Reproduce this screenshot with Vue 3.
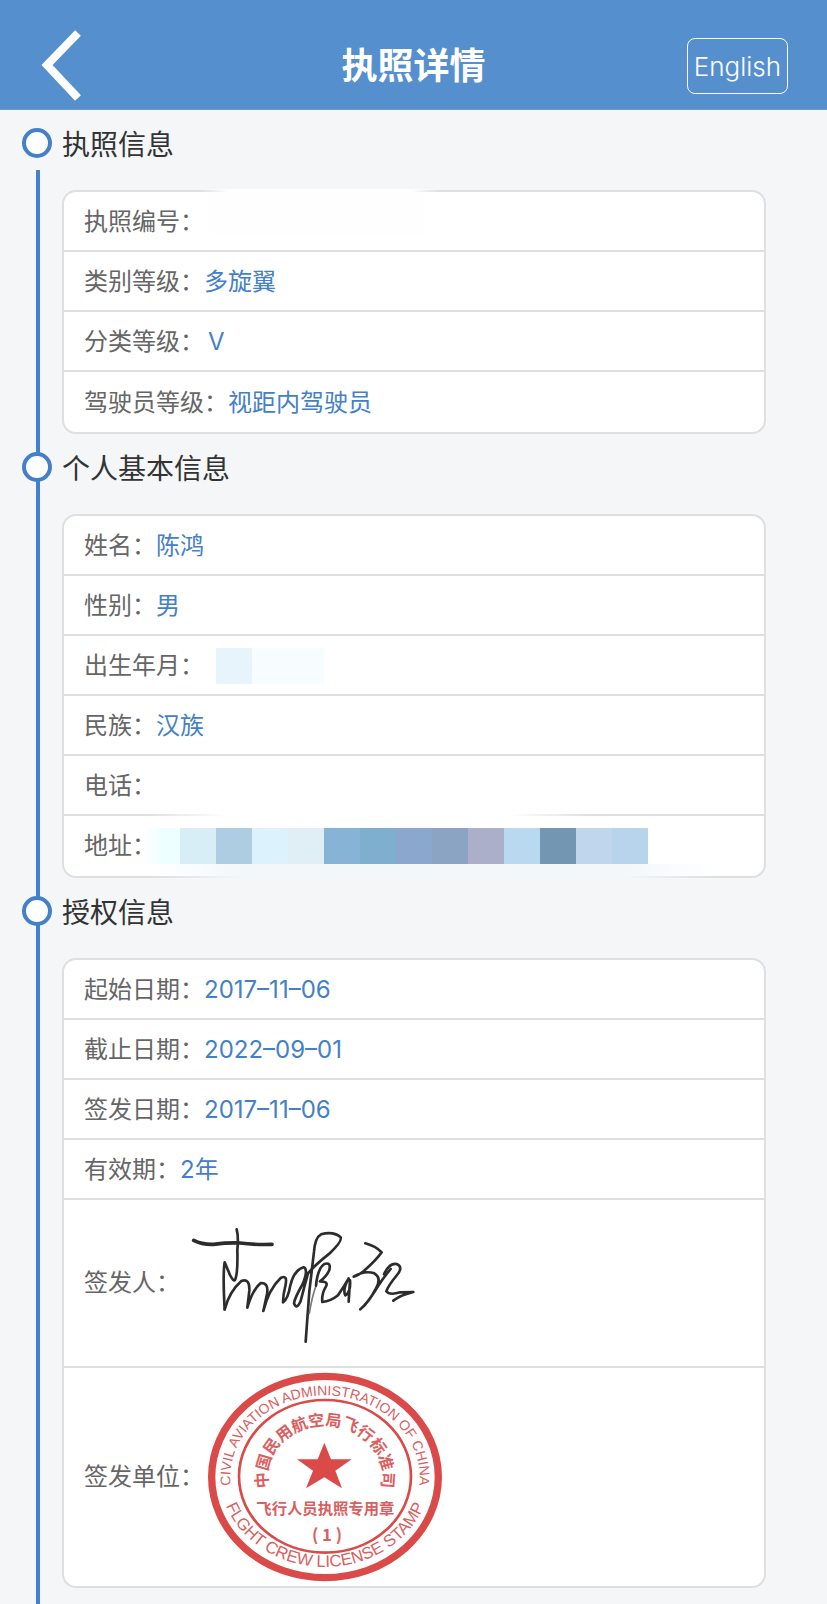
<template>
    <div class="page">
        <header class="header">
            <button class="back" type="button" aria-label="返回">
                <svg width="44" height="72" viewBox="0 0 44 72">
                    <path d="M39 3 L8 35 L39 68" fill="none" stroke="#fff" stroke-width="8" />
                </svg>
            </button>
            <h1 class="title">执照详情</h1>
            <button class="lang" type="button">English</button>
        </header>

        <main class="timeline">
            <section class="section" v-for="section in sections" :key="section.title">
                <h2 class="section-title">{{section.title}}</h2>
                <dl class="card">
                    <div class="row" :class="row.type" v-for="row in section.rows" :key="row.label">
                        <dt>{{row.label}}：</dt>
                        <dd>
                            <svg v-if="row.type === 'signature'" class="sign" viewBox="0 -6 750 450">
                                <g fill="none" stroke="#2c2c2c" stroke-width="8" stroke-linecap="round" stroke-linejoin="round">
                                    <path d="M41 91 Q66 104 100 103 Q140 98 180 99 Q225 105 276 103" stroke-width="11" />
                                    <path d="M170 58 Q176 80 172 120 Q174 190 165 210 Q160 215 150 195 L134 157 Q128 190 134 298" />
                                    <path d="M134 298 Q148 245 184 213 Q210 204 208 242 L202 293 Q217 240 242 219 Q267 218 261 252 L250 303 Q266 238 302 204 Q324 192 316 228 Q309 255 309 277 Q324 268 331 226 Q342 180 371 172 Q386 178 368 222 Q344 264 342 280 Q350 301 362 273 Q374 226 384 190" />
                                    <path d="M384 190 Q405 165 448 131 Q490 91 481 81 Q460 63 423 73 Q405 83 402 125 L388 244 L377 395" />
                                    <path d="M408 227 Q396 260 388 310" stroke="#777" stroke-width="5" />
                                    <path d="M408 227 Q413 175 433 162 Q454 155 448 180 Q440 199 420 214 Q446 214 438 229 Q424 252 427 276 Q452 274 474 256 Q492 229 506 205 Q487 239 496 256 Q513 247 510 211 L506 275" />
                                    <path d="M556 100 Q588 109 605 127 Q590 149 554 181 Q532 199 521 200 Q555 180 583 190 Q606 204 588 235 Q567 276 541 298 Q560 282 583 246 Q607 206 632 177" />
                                    <path d="M612 193 Q628 158 650 162 Q671 171 651 195 Q624 228 619 244 Q628 257 661 247 L700 246 Q662 255 640 272" />
                                </g>
                            </svg>
                            <svg v-else-if="row.type === 'seal'" class="stamp" viewBox="27 27 720 648">
                                <defs>
                                    <path id="arc-top" d="M114 410 A284 246 0 1 1 666 410" />
                                    <path id="arc-inner" d="M226 395 A172 152 0 1 1 554 395" />
                                    <path id="arc-bottom" d="M80 400 A318 284 0 0 0 700 400" />
                                </defs>
                                <ellipse cx="390" cy="351" rx="340" ry="302" fill="none" stroke="#da4a48" stroke-width="22" />
                                <ellipse cx="390" cy="349" rx="258" ry="229" fill="none" stroke="#da4a48" stroke-width="8" />
                                <path d="M388 248 L408 298 L470 298 L421 332 L441 385 L388 352 L333 385 L354 332 L306 298 L368 298 Z" fill="#da4a48" />
                                <g fill="#d9605f" text-anchor="middle">
                                    <text class="seal-en" font-size="42"><textPath href="#arc-top" startOffset="50%">CIVIL AVIATION ADMINISTRATION OF CHINA</textPath></text>
                                    <text class="seal-cn" font-size="48"><textPath href="#arc-inner" startOffset="50%">中国民用航空局飞行标准司</textPath></text>
                                    <text class="seal-cn" x="391" y="462" font-size="46">飞行人员执照专用章</text>
                                    <text class="seal-cn" x="396" y="543" font-size="50">( 1 )</text>
                                    <text class="seal-en" font-size="50"><textPath href="#arc-bottom" startOffset="50%">FLGHT CREW LICENSE STAMP</textPath></text>
                                </g>
                            </svg>
                            <span v-else-if="row.blocks" class="blocks">
                                <i v-for="(color,index) in row.blocks" :key="index" :style="{background: color}"></i>
                            </span>
                            <template v-else>{{row.value}}</template>
                        </dd>
                    </div>
                </dl>
            </section>
        </main>
    </div>
</template>

<script setup>
const sections = [
    {
        title: '执照信息',
        rows: [
            { label: '执照编号', value: '', type: 'number' },
            { label: '类别等级', value: '多旋翼' },
            { label: '分类等级', value: 'V', type: 'class' },
            { label: '驾驶员等级', value: '视距内驾驶员' },
        ],
    },
    {
        title: '个人基本信息',
        rows: [
            { label: '姓名', value: '陈鸿' },
            { label: '性别', value: '男' },
            { label: '出生年月', type: 'birth', blocks: ['#e7f4fc', '#f6fcff', '#f6fcff'] },
            { label: '民族', value: '汉族' },
            { label: '电话', value: '', type: 'phone' },
            {
                label: '地址',
                type: 'address',
                blocks: [
                    'linear-gradient(90deg, #fff, #eeffff 50%)', '#d8eef7', '#aecce2', '#dcf3fd', '#e0eff5',
                    '#86b3d6', '#7fafcf', '#8aa8cd', '#8ca4c4', '#abafca', '#b8d9ef', '#7397b2', '#c0d6ed', '#b8d4ed',
                ],
            },
        ],
    },
    {
        title: '授权信息',
        rows: [
            { label: '起始日期', value: '2017–11–06' },
            { label: '截止日期', value: '2022–09–01' },
            { label: '签发日期', value: '2017–11–06' },
            { label: '有效期', value: '2年' },
            { label: '签发人', type: 'signature' },
            { label: '签发单位', type: 'seal' },
        ],
    },
]
</script>

<style>
body {
    background: #f5f6f8;
}
</style>

<style scoped>
.page {
    font-family: Inter, "Noto Sans CJK SC", sans-serif;
    color: #333;
}
.header {
    display: grid;
    grid-template-columns: 1fr auto 1fr;
    align-items: center;
    box-sizing: border-box;
    height: 110px;
    padding: 23px 39px 0 39px;
    background: #568fcd;
    border-bottom: 1px solid #6f99c6;
}
.back {
    justify-self: start;
    display: flex;
    padding: 0;
    border: 0;
    background: none;
    cursor: pointer;
}
.title {
    margin: 0;
    font-size: 36px;
    line-height: 54px;
    font-weight: 700;
    color: #fff;
}
.lang {
    justify-self: end;
    box-sizing: border-box;
    height: 56px;
    padding: 0 6px;
    border: 1px solid #fff;
    border-radius: 8px;
    background: none;
    color: #fff;
    font-family: inherit;
    font-size: 26px;
    font-weight: 300;
    cursor: pointer;
}
.timeline {
    position: relative;
    padding: 0 61px 16px 62px;
}
/* vertical line behind the dots */
.timeline::before {
    content: "";
    position: absolute;
    top: 60px;
    bottom: 0;
    left: 36px;
    width: 4px;
    background: #4380cf;
}
.section-title {
    position: relative;
    margin: 0 0 14px;
    padding-top: 4px;
    font-size: 28px;
    line-height: 62px;
    font-weight: 400;
}
.section-title::before {
    content: "";
    position: absolute;
    top: 18px;
    left: -40px;
    box-sizing: border-box;
    width: 30px;
    height: 30px;
    border: 4px solid #4380c8;
    border-radius: 50%;
    background: #fff;
}
.card {
    margin: 0;
    border: 2px solid #dddfe1;
    border-radius: 14px;
    background: #fff;
}
.row {
    position: relative;
    display: flex;
    align-items: center;
    box-sizing: border-box;
    min-height: 60px;
    padding: 2px 0 0 20px;
    border-bottom: 2px solid #dddfe1;
    font-size: 24px;
    line-height: 36px;
    font-weight: 400;
}
.row:last-child {
    border-bottom: 0;
}
dt {
    color: #666;
}
dd {
    display: flex;
    margin: 0;
    color: #4480c8;
}
.class dd {
    padding-left: 4px;
}
.signature {
    min-height: 168px;
    padding-top: 0;
}
.seal {
    min-height: 218px;
    padding-top: 0;
}
.sign {
    width: 250px;
    height: 150px;
}
.stamp {
    width: 240px;
    height: 216px;
}
.seal-en {
    font-family: "Liberation Sans Narrow", "Liberation Sans", sans-serif;
}
.seal-cn {
    font-family: "Noto Sans CJK SC", sans-serif;
    font-weight: 700;
}
.blocks {
    display: flex;
}
.blocks i {
    width: 36px;
    height: 36px;
}
.birth .blocks {
    padding-left: 12px;
}
.address {
    padding-top: 0;
}
.address .blocks {
    position: relative;
    margin-left: -12px;
    z-index: 1;
}
/* wiped areas that run over the card lines */
.number::after,
.phone::after,
.address::after {
    content: "";
    position: absolute;
}
.number::after {
    top: -3px;
    left: 136px;
    width: 240px;
    height: 46px;
    background: linear-gradient(90deg, transparent, #fefefe 12%, #fefefe 88%, transparent);
}
.phone::after {
    bottom: -4px;
    left: 84px;
    width: 440px;
    height: 6px;
    background: linear-gradient(90deg, transparent, #fff 18%, #fff 82%, transparent);
}
.address::after {
    bottom: -4px;
    left: 90px;
    width: 560px;
    height: 16px;
    background: linear-gradient(90deg, transparent, #f3f7fa 16%, #f3f7fa 84%, transparent);
}
</style>
